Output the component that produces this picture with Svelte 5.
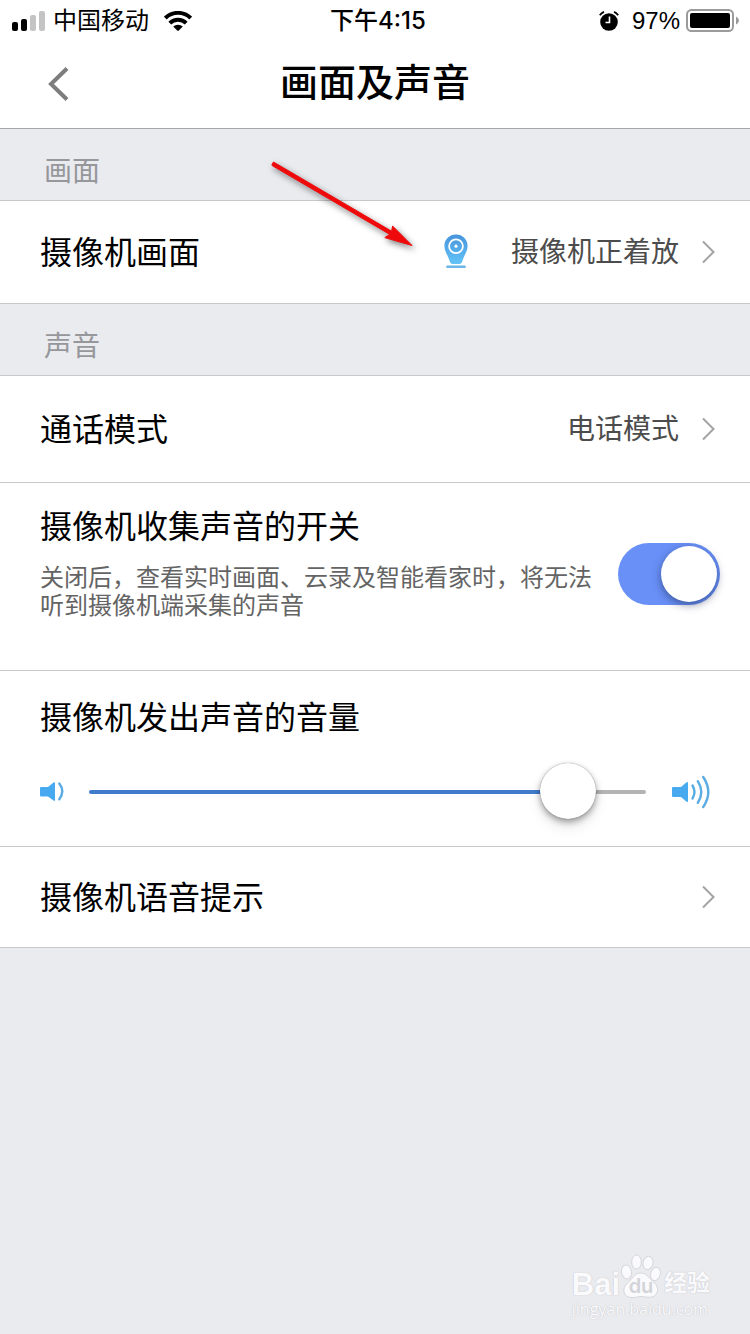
<script>
  let micOn = $state(true);
  let volume = $state(90);
</script>

{#snippet chevron()}
  <svg class="chevron" width="14" height="24" viewBox="0 0 14 24" aria-hidden="true">
    <path d="M2 1.5 L12.5 12 L2 22.5" fill="none" stroke="#a3a3a3" stroke-width="2" />
  </svg>
{/snippet}

<div class="screen">
  <div class="status">
    <div class="status-left">
      <svg width="34" height="20" viewBox="0 0 34 20" aria-hidden="true">
        <rect x="0" y="11" width="6" height="9" rx="2" />
        <rect x="9" y="8" width="6" height="12" rx="2" />
        <rect x="18" y="4" width="6" height="16" rx="2" fill="#c4c4c4" />
        <rect x="27" y="0" width="6" height="20" rx="2" fill="#c4c4c4" />
      </svg>
      <span class="carrier">中国移动</span>
      <svg width="28" height="20" viewBox="0 0 28 20" aria-hidden="true">
        <g fill="none" stroke="#000" stroke-width="4">
          <path d="M1.3 7.1 A18 18 0 0 1 26.7 7.1" />
          <path d="M5.8 12.2 A11.6 11.6 0 0 1 22.2 12.2" />
        </g>
        <path d="M9.2 15.6 A7 7 0 0 1 18.8 15.6 L14.8 19.6 Q14 20.2 13.2 19.6 Z" />
      </svg>
    </div>
    <time class="clock">下午4:15</time>
    <div class="status-right">
      <svg width="20" height="20" viewBox="0 0 20 20" aria-hidden="true">
        <circle cx="10" cy="11" r="8.8" />
        <path d="M0.8 4.2 A11 11 0 0 1 5 0.9 M15 0.9 A11 11 0 0 1 19.2 4.2" fill="none" stroke="#000" stroke-width="1.8" />
        <path d="M10.5 5.5 V11.5 H6.5" fill="none" stroke="#fff" stroke-width="1.6" />
      </svg>
      <span class="percent">97%</span>
      <svg width="54" height="24" viewBox="0 0 54 24" aria-hidden="true">
        <rect x="1" y="1" width="46" height="21" rx="4.5" fill="none" stroke="#9b9b9b" stroke-width="2" />
        <rect x="4" y="4" width="40" height="15" rx="2" />
        <path d="M50 7.5 Q53 9 53 11.5 Q53 14 50 15.5 Z" fill="#9b9b9b" />
      </svg>
    </div>
  </div>

  <header class="nav">
    <button class="back" aria-label="返回">
      <svg width="24" height="36" viewBox="0 0 24 36" aria-hidden="true">
        <path d="M21 2.5 L5 18 L21 33.5" fill="none" stroke="#7d7d7d" stroke-width="4" />
      </svg>
    </button>
    <h1>画面及声音</h1>
  </header>

  <main>
    <h2>画面</h2>
    <section>
      <button class="row link">
        <span class="label">摄像机画面</span>
        <span class="value">
          <svg width="26" height="36" viewBox="0 0 26 36" aria-hidden="true">
            <defs>
              <linearGradient id="cam" x1="0" y1="0" x2="0" y2="1">
                <stop offset="0" stop-color="#4794dc" />
                <stop offset="1" stop-color="#63c3f8" />
              </linearGradient>
            </defs>
            <path d="M13 0.5 C6.5 0.5 1.4 5.4 1.4 11.7 C1.4 17.5 4.6 20.5 6.6 27 Q7.4 30 9 30 H17 Q18.6 30 19.4 27 C21.4 20.5 24.6 17.5 24.6 11.7 C24.6 5.4 19.5 0.5 13 0.5 Z" fill="url(#cam)" />
            <circle cx="13" cy="12.2" r="6.9" fill="none" stroke="#fff" stroke-width="1.8" />
            <circle cx="13" cy="12.2" r="1.6" fill="#fff" />
            <rect x="3.2" y="31.6" width="19.6" height="2.4" rx="1" fill="#6bb6e6" />
          </svg>
          摄像机正着放
        </span>
        {@render chevron()}
      </button>
    </section>

    <h2>声音</h2>
    <section>
      <button class="row link mode">
        <span class="label">通话模式</span>
        <span class="value">电话模式</span>
        {@render chevron()}
      </button>

      <div class="row collect">
        <div class="copy">
          <label class="label" for="mic">摄像机收集声音的开关</label>
          <p id="mic-note">关闭后，查看实时画面、云录及智能看家时，将无法听到摄像机端采集的声音</p>
        </div>
        <input id="mic" class="switch" type="checkbox" role="switch" aria-describedby="mic-note" bind:checked={micOn} />
      </div>

      <div class="row volume">
        <label class="label" for="volume">摄像机发出声音的音量</label>
        <div class="slider">
          <svg width="26" height="22" viewBox="0 0 26 22" aria-hidden="true">
            <path d="M1 6 H8 L13.5 1.6 Q15 0.8 15 2 V19 Q15 20.4 13.5 19.6 L8 15.4 H1 Q0 15.4 0 14.4 V7 Q0 6 1 6 Z" fill="#47aaf0" />
            <path d="M19.3 2.6 Q25.3 10.2 19.3 18.2" fill="none" stroke="#5aace2" stroke-width="2.4" stroke-linecap="round" />
          </svg>
          <input id="volume" type="range" min="0" max="100" bind:value={volume} style="--fill: {volume}%" />
          <svg width="40" height="34" viewBox="0 0 40 34" aria-hidden="true">
            <path d="M1 12 H9 L14.6 7.3 Q16 6.4 16 8 V26 Q16 27.6 14.6 26.7 L9 22 H1 Q0 22 0 21 V13 Q0 12 1 12 Z" fill="#47aaf0" />
            <g fill="none" stroke="#5aace2" stroke-width="2.4" stroke-linecap="round">
              <path d="M20.5 10.5 Q24.5 17 20.5 23.5" />
              <path d="M25.8 6.2 Q32.8 17 25.8 27.8" />
              <path d="M31.2 2 Q41.4 17 31.2 32" />
            </g>
          </svg>
        </div>
      </div>

      <button class="row link prompt">
        <span class="label">摄像机语音提示</span>
        {@render chevron()}
      </button>
    </section>
  </main>

  <svg class="arrow" width="160" height="110" viewBox="0 0 160 110" aria-hidden="true">
    <path d="M9 12.4 L10.5 10 L128.6 79.2 L129.6 74 L149 93.5 L121.8 85.6 L126.8 82.4 L9.2 13.6 Z" fill="#ee0a0a" stroke="#ee0a0a" stroke-width="1" stroke-linejoin="round" />
  </svg>

  <div class="watermark">
    <div class="brand">
      <span class="bai">Bai</span>
      <span class="paw">
        <svg width="42" height="46" viewBox="0 0 42 46" aria-hidden="true">
          <g fill="#fafafc" stroke="#d6d7dc" stroke-width="1">
            <ellipse cx="6.5" cy="18" rx="5" ry="7" transform="rotate(-10 6.5 18)" />
            <ellipse cx="16.5" cy="8" rx="4.8" ry="7" />
            <ellipse cx="28" cy="9" rx="5" ry="6.7" transform="rotate(12 28 9)" />
            <ellipse cx="35.5" cy="20" rx="4.8" ry="6.8" transform="rotate(14 35.5 20)" />
            <path d="M20.5 19 C14 19 12.5 25 7.5 29 C1.5 34 3 43 11 43.5 C16 44 18 42.5 21 42.5 C25 42.5 28 44 32 43 C39 41 39 33 34.5 29 C29 24.5 27.5 19 20.5 19 Z" />
          </g>
        </svg>
        <span class="du">du</span>
      </span>
      <span class="jy">经验</span>
    </div>
    <div class="site">jingyan.baidu.com</div>
  </div>
</div>

<style>
  :global(body) {
    margin: 0;
    background: #eaebef;
  }

  .screen {
    position: relative;
    min-height: 100vh;
    box-sizing: border-box;
    overflow: hidden;
    background: #eaebef;
    color: #000;
    font-family: Inter, "Noto Sans CJK SC", sans-serif;
  }

  button {
    border: 0;
    padding: 0;
    background: none;
    color: inherit;
    font: inherit;
    text-align: left;
  }

  svg {
    display: block;
    flex: none;
  }

  .status {
    display: grid;
    grid-template-columns: 1fr auto 1fr;
    align-items: center;
    height: 40px;
    padding: 0 12px;
    background: #fff;
    font-size: 24px;
    line-height: 42px;
  }

  .status-left,
  .status-right {
    display: flex;
    align-items: center;
    height: 40px;
  }

  .status-right {
    justify-content: flex-end;
    margin-right: -2px;
  }

  .carrier {
    margin: 0 15px 0 7px;
  }

  .clock {
    margin-left: 6px;
    font-weight: 500;
  }

  .percent {
    margin: 0 6px 0 13px;
    font-family: "Liberation Sans", sans-serif;
    font-size: 24px;
  }

  .nav {
    display: grid;
    grid-template-columns: 1fr auto 1fr;
    align-items: center;
    height: 88px;
    border-bottom: 1px solid #a5a5ae;
    background: #fff;
  }

  .back {
    justify-self: start;
    padding-left: 46px;
  }

  h1 {
    margin: 0;
    padding-bottom: 4px;
    font-size: 38px;
    font-weight: 500;
    line-height: 48px;
  }

  h2 {
    margin: 0;
    padding: 22px 44px 9px;
    color: #96979b;
    font-size: 28px;
    font-weight: 400;
    line-height: 40px;
  }

  section {
    border-top: 1px solid #c8c8cc;
    background: #fff;
  }

  .row {
    box-sizing: border-box;
    border-bottom: 1px solid #c8c8cc;
  }

  .link {
    display: flex;
    align-items: center;
    width: 100%;
    min-height: 103px;
    padding: 0 35px 0 40px;
  }

  .mode {
    min-height: 107px;
  }

  .prompt {
    min-height: 101px;
  }

  .label {
    padding-top: 2px;
    font-size: 32px;
    line-height: 48px;
  }

  .value {
    display: flex;
    align-items: center;
    gap: 42px;
    margin-left: auto;
    color: #4c4c4c;
    font-size: 28px;
    line-height: 40px;
  }

  .chevron {
    margin-left: auto;
  }

  .value + .chevron {
    margin-left: 22px;
  }

  .collect {
    display: flex;
    align-items: center;
    gap: 16px;
    min-height: 188px;
    padding: 18px 30px 50px 40px;
  }

  .copy {
    flex: 1;
  }

  .copy .label {
    display: block;
  }

  .copy p {
    margin: 13px 0 0;
    color: #646464;
    font-size: 24px;
    line-height: 28px;
  }

  .switch {
    appearance: none;
    flex: none;
    width: 102px;
    height: 62px;
    margin: 26px 0 0;
    padding: 3px;
    box-sizing: border-box;
    border-radius: 31px;
    background: #6990f7;
  }

  .switch::before {
    content: "";
    display: block;
    width: 56px;
    height: 56px;
    border-radius: 50%;
    background: #fff;
    box-shadow: 0 3px 8px rgba(20, 30, 70, 0.5);
  }

  .switch:checked::before {
    margin-left: auto;
  }

  .switch:not(:checked) {
    background: #d8d8dc;
  }

  .volume {
    min-height: 176px;
    padding: 21px 38px 25px 40px;
  }

  .volume .label {
    display: block;
  }

  .slider {
    display: flex;
    align-items: center;
    margin-top: 21px;
  }

  .slider input {
    appearance: none;
    flex: 1;
    min-width: 0;
    height: 58px;
    margin: 0 26px 0 23px;
    background: none;
  }

  .slider input::-webkit-slider-runnable-track {
    height: 4px;
    border-radius: 2px;
    background: linear-gradient(to right, #417bcb var(--fill), #b4b4b4 var(--fill));
  }

  .slider input::-webkit-slider-thumb {
    appearance: none;
    width: 56px;
    height: 56px;
    margin-top: -27px;
    border-radius: 50%;
    background: #fff;
    box-shadow: 0 0 1px rgba(0, 0, 0, 0.5), 0 3px 6px rgba(0, 0, 0, 0.35), 0 8px 14px rgba(0, 0, 0, 0.1);
  }

  .arrow {
    position: absolute;
    top: 152px;
    left: 263px;
    pointer-events: none;
    filter: drop-shadow(2px 3px 3px rgba(0, 0, 0, 0.5));
  }

  .watermark {
    position: absolute;
    right: 40px;
    bottom: 16px;
    color: #fafafc;
    text-shadow: 0 0 1px #c6c7cc, 0 0 1px #c6c7cc;
    pointer-events: none;
  }

  .brand {
    display: flex;
    align-items: flex-end;
    height: 46px;
  }

  .bai {
    font-family: "Liberation Sans", sans-serif;
    font-size: 31px;
    font-weight: 700;
    line-height: 30px;
  }

  .paw {
    position: relative;
  }

  .du {
    position: absolute;
    inset: auto 0 4px 0;
    color: #d3d4d9;
    font-size: 20px;
    font-weight: 600;
    line-height: 20px;
    text-align: center;
    text-shadow: none;
  }

  .jy {
    margin-left: 2px;
    font-size: 23px;
    font-weight: 700;
    line-height: 34px;
  }

  .site {
    font-family: "Open Sans", sans-serif;
    font-size: 16px;
    line-height: 18px;
  }
</style>
